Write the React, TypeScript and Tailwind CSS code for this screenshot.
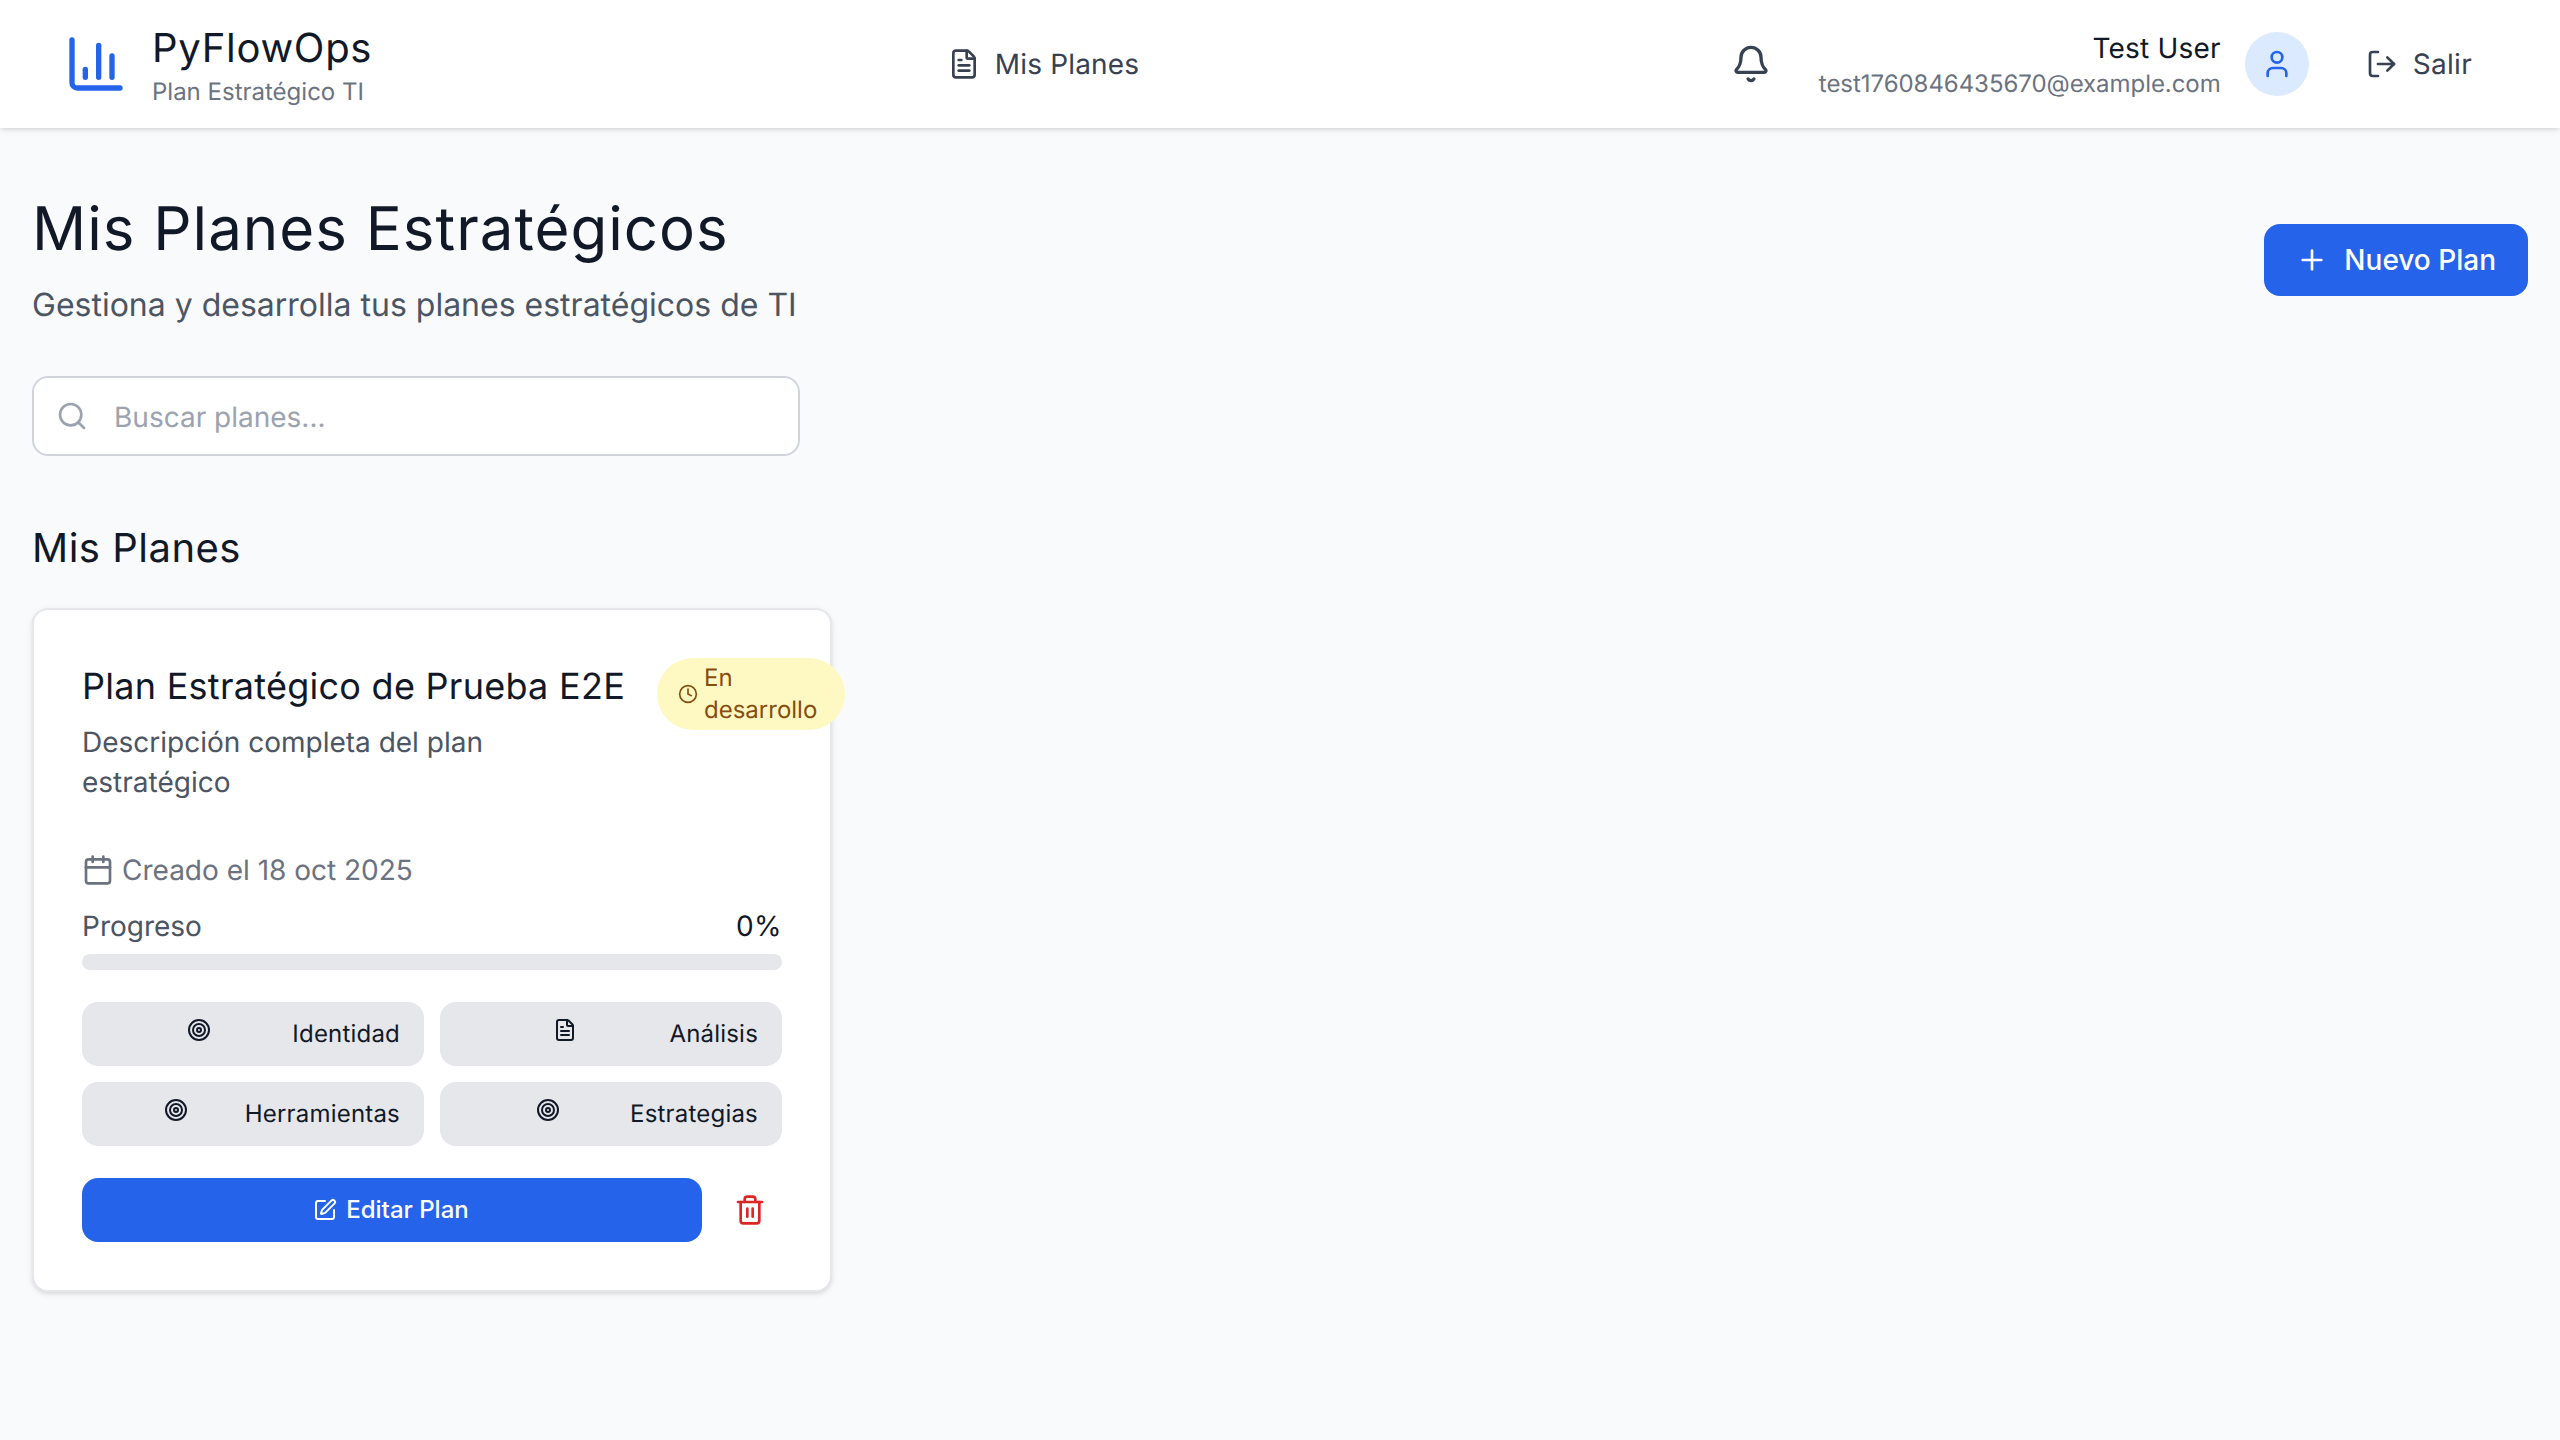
import { Bell, Calendar, ChartColumn, Clock, FileText, LogOut, Plus, Search, SquarePen, Target, Trash2, User } from "lucide-react";

const tiles = [
  { label: "Identidad", Icon: Target, gap: "gap-[81px]" },
  { label: "Análisis", Icon: FileText, gap: "gap-[92px]" },
  { label: "Herramientas", Icon: Target, gap: "gap-[57px]" },
  { label: "Estrategias", Icon: Target, gap: "gap-[70px]" },
];

export default function App() {
  return (
    <div className="min-h-[1440px] bg-[#f9fafb] text-[#111827] font-['Inter','Liberation_Sans',sans-serif] [text-rendering:geometricPrecision]">
      <header className="relative flex h-[128px] items-center justify-between bg-white px-[64px] shadow-[0_2px_6px_0_rgba(0,0,0,0.1),0_2px_4px_-2px_rgba(0,0,0,0.1)]">
        <div className="flex items-center gap-[24px]">
          <ChartColumn size={64} className="text-[#2563eb]" />
          <div>
            <div className="text-[40px] leading-[56px] tracking-[0.72px]">PyFlowOps</div>
            <div className="text-[24px] leading-[32px] text-[#6b7280]">Plan Estratégico TI</div>
          </div>
        </div>
        <nav className="flex items-center gap-[15px] text-[28px] leading-[40px] tracking-[0.16px] text-[#374151]">
          <FileText size={32} />
          <span>Mis Planes</span>
        </nav>
        <div className="flex items-center gap-[32px]">
          <div className="flex p-[16px] text-[#374151]">
            <Bell size={40} />
          </div>
          <div className="flex items-center gap-[24px]">
            <div className="text-right">
              <div className="text-[28px] leading-[40px] tracking-[0.2px]">Test User</div>
              <div className="text-[24px] leading-[32px] text-[#6b7280] tracking-[-0.05px]">test1760846435670@example.com</div>
            </div>
            <div className="flex h-[64px] w-[64px] items-center justify-center rounded-full bg-[#dbeafe] text-[#2563eb]">
              <User size={32} />
            </div>
          </div>
          <div className="flex items-center gap-[15px] pl-[25px] pr-[24px] text-[28px] leading-[40px] tracking-[0.3px] text-[#374151]">
            <LogOut size={32} />
            <span>Salir</span>
          </div>
        </div>
      </header>
      <main className="px-[32px] pt-[64px]">
        <div className="flex items-start justify-between">
          <div>
            <h1 className="pt-[1px] text-[60px] leading-[72px] tracking-[1px]">Mis Planes Estratégicos</h1>
            <p className="mt-[16px] text-[32px] leading-[48px] text-[#4b5563]">Gestiona y desarrolla tus planes estratégicos de TI</p>
          </div>
          <button className="mt-[32px] flex h-[72px] items-center gap-[16px] rounded-[16px] bg-[#2563eb] px-[32px] text-[28px] font-medium text-white">
            <Plus size={32} />
            Nuevo Plan
          </button>
        </div>
        <div className="mt-[47px] flex h-[80px] w-[768px] items-center gap-[26px] rounded-[16px] border-2 border-[#d1d5db] bg-white pl-[22px] pr-[24px]">
          <Search size={32} className="text-[#9ca3af]" />
          <span className="pt-[2px] text-[28px] text-[#9ca3af]">Buscar planes...</span>
        </div>
        <h2 className="mt-[64px] text-[40px] leading-[56px] tracking-[0.5px]">Mis Planes</h2>
        <section className="mt-[32px] w-[800px] rounded-[16px] border-2 border-[#e5e7eb] bg-white p-[48px] shadow-[0_2px_6px_0_rgba(0,0,0,0.1),0_2px_4px_-2px_rgba(0,0,0,0.1)]">
          <div className="flex items-start gap-[16px]">
            <div className="w-[560px] shrink-0">
              <h3 className="whitespace-nowrap text-[36px] leading-[56px] tracking-[0.27px]">Plan Estratégico de Prueba E2E</h3>
              <p className="mt-[8px] w-[440px] text-[28px] leading-[40px] text-[#4b5563]">Descripción completa del plan estratégico</p>
            </div>
            <div className="ml-[-1px] flex w-[188px] shrink-0 items-center gap-[6px] rounded-full bg-[#fef9c3] py-[4px] pl-[21px] pr-[20px] text-[24px] leading-[32px] text-[#854d0e]">
              <Clock size={20} className="shrink-0" />
              <span>En desarrollo</span>
            </div>
          </div>
          <div className="mt-[48px] flex items-center gap-[8px] text-[28px] leading-[40px] text-[#6b7280]">
            <Calendar size={32} />
            <span>Creado el 18 oct 2025</span>
          </div>
          <div className="mt-[16px] flex justify-between text-[28px] leading-[40px]">
            <span className="text-[#4b5563]">Progreso</span>
            <span className="tracking-[0.4px]">0%</span>
          </div>
          <div className="mt-[8px] h-[16px] rounded-full bg-[#e5e7eb]" />
          <div className="mt-[32px] grid grid-cols-2 gap-[16px]">
            {tiles.map(({ label, Icon, gap }) => (
              <div key={label} className={`flex h-[64px] items-center justify-end rounded-[16px] bg-[#e5e7eb] px-[24px] text-[24px] tracking-[0.2px] ${gap}`}>
                <Icon size={24} className="mb-[8px]" />
                <span>{label}</span>
              </div>
            ))}
          </div>
          <div className="mt-[32px] flex gap-[16px]">
            <button className="flex h-[64px] flex-1 items-center justify-center gap-[9px] rounded-[16px] bg-[#2563eb] pr-[2px] text-[24px] font-medium text-white">
              <SquarePen size={24} />
              Editar Plan
            </button>
            <div className="flex h-[64px] w-[64px] items-center justify-center text-[#dc2626]">
              <Trash2 size={32} />
            </div>
          </div>
        </section>
      </main>
    </div>
  );
}
